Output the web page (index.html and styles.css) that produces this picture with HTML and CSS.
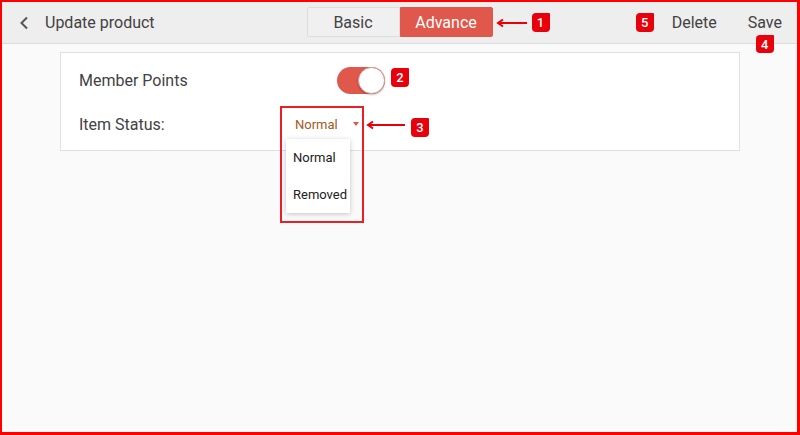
FILE: index.html
```html
<!DOCTYPE html>
<html>
<head>
<meta charset="utf-8">
<link rel="stylesheet" href="styles.css">
</head>
<body>
<div class="frame">
  <header class="topbar">
    <div class="left">
      <svg class="back" width="10" height="14" viewBox="0 0 10 14"><polyline points="8,1.5 2.5,7 8,12.5" fill="none" stroke="#555" stroke-width="2"/></svg>
      <span class="title">Update product</span>
    </div>
    <div class="segment">
      <div class="seg">Basic</div>
      <div class="seg active">Advance</div>
    </div>
    <div class="right">
      <svg class="arrow" width="32" height="10" viewBox="0 0 32 10"><line x1="2" y1="5" x2="31" y2="5" stroke="#e8000b" stroke-width="2"/><polyline points="7,1.5 2,5 7,8.5" fill="none" stroke="#e8000b" stroke-width="2"/></svg>
      <span class="badge">1</span>
      <span class="spacer"></span>
      <span class="badge">5</span>
      <span class="action delete">Delete</span>
      <span class="action save">Save<span class="badge badge-4">4</span></span>
    </div>
  </header>
  <main class="content">
    <section class="card">
      <div class="row">
        <span class="label label-wide">Member Points</span>
        <span class="toggle"><span class="knob"></span></span>
        <span class="badge badge-2">2</span>
      </div>
      <div class="row">
        <span class="label label-narrow">Item Status:</span>
        <div class="select">
          <span class="value">Normal</span>
          <span class="caret"></span>
          <div class="menu">
            <div class="item">Normal</div>
            <div class="item">Removed</div>
          </div>
          <div class="highlight"></div>
        </div>
        <svg class="arrow arrow-3" width="40" height="10" viewBox="0 0 40 10"><line x1="2" y1="5" x2="39" y2="5" stroke="#e8000b" stroke-width="2"/><polyline points="7,1.5 2,5 7,8.5" fill="none" stroke="#e8000b" stroke-width="2"/></svg>
        <span class="badge badge-3">3</span>
      </div>
    </section>
  </main>
</div>
</body>
</html>
```

FILE: styles.css
```css
* { box-sizing: border-box; }
html, body { margin: 0; padding: 0; }
body {
  width: 800px;
  height: 435px;
  font-family: Roboto, "Liberation Sans", sans-serif;
  background: #fafafa;
  overflow: hidden;
}
.frame {
  width: 800px;
  height: 435px;
  border-style: solid;
  border-color: #f00;
  border-width: 2px 3px 3px 2px;
  display: flex;
  flex-direction: column;
  background: #fafafa;
}
.topbar {
  height: 42px;
  flex: none;
  background: #eeeeee;
  border-bottom: 1px solid #dcdcdc;
  display: grid;
  grid-template-columns: 1fr auto 1fr;
  align-items: center;
}
.left {
  display: flex;
  align-items: center;
  padding-left: 17px;
}
.back { display: block; margin-top: 1px; }
.title {
  margin-left: 16px;
  font-size: 16px;
  color: #424242;
}
.segment {
  display: flex;
  height: 30px;
  margin-top: -1px;
}
.seg {
  width: 93px;
  display: flex;
  align-items: center;
  justify-content: center;
  font-size: 16px;
  color: #424242;
  background: #f0f0f0;
  border: 1px solid #dddddd;
  border-radius: 2px 0 0 2px;
}
.seg.active {
  background: #e0574b;
  border-color: #e0574b;
  color: #fff;
  border-radius: 0 2px 2px 0;
}
.right {
  display: flex;
  align-items: center;
  padding-right: 15px;
  height: 100%;
}
.arrow { display: block; flex: none; }
.right .arrow { margin-left: 3px; }
.badge {
  flex: none;
  width: 18px;
  height: 19px;
  background: #e8000b;
  color: #fff;
  font-size: 13px;
  font-weight: 500;
  display: inline-flex;
  align-items: center;
  justify-content: center;
  border-radius: 4px 1px 4px 4px;
  margin-left: 4px;
}
.spacer { flex: 1; }
.action {
  font-size: 16px;
  color: #424242;
}
.delete { margin-left: 18px; }
.save { margin-left: 31px; position: relative; }
.badge-4 {
  position: absolute;
  left: 8px;
  top: 22px;
  margin: 0;
  height: 18px;
}
.content {
  flex: 1;
  padding: 8px 0 0 58px;
}
.card {
  width: 680px;
  background: #fff;
  border: 1px solid #e0e0e0;
  padding: 9px 0 8px 18px;
  display: flex;
  flex-direction: column;
  gap: 8px;
}
.row {
  height: 36px;
  display: flex;
  align-items: center;
}
.label {
  font-size: 16px;
  color: #424242;
  flex: none;
}
.label-wide { width: 258px; }
.label-narrow { width: 201px; }
.toggle {
  position: relative;
  width: 48px;
  height: 27px;
  border-radius: 14px;
  background: #e0574b;
  flex: none;
}
.knob {
  position: absolute;
  right: 0;
  top: 0;
  width: 27px;
  height: 27px;
  border-radius: 50%;
  background: #fff;
  border: 1px solid #d9a09a;
  box-shadow: 0 1px 2px rgba(0,0,0,0.25);
}
.badge-2 {
  margin-left: 6px;
  margin-top: -6px;
}
.select {
  position: relative;
  width: 84px;
  height: 36px;
  display: flex;
  align-items: center;
  padding-left: 15px;
  flex: none;
}
.value {
  font-size: 13px;
  color: #a35a22;
}
.caret {
  position: absolute;
  right: 5px;
  top: 16px;
  width: 0;
  height: 0;
  border-left: 3.5px solid transparent;
  border-right: 3.5px solid transparent;
  border-top: 4px solid #e0574b;
}
.menu {
  position: absolute;
  left: 6px;
  top: 33px;
  width: 64px;
  height: 74px;
  background: #fff;
  box-shadow: 0 1px 5px rgba(0,0,0,0.22);
  z-index: 2;
}
.item {
  height: 37px;
  display: flex;
  align-items: center;
  padding-left: 7px;
  font-size: 13px;
  color: #212121;
}
.highlight {
  position: absolute;
  left: 0;
  top: 0;
  width: 84px;
  height: 117px;
  border: 2px solid #ee1c24;
  z-index: 3;
  pointer-events: none;
}
.arrow-3 { margin-left: 2px; margin-top: 2px; }
.badge-3 { margin-left: 5px; margin-top: 6px; }
```
